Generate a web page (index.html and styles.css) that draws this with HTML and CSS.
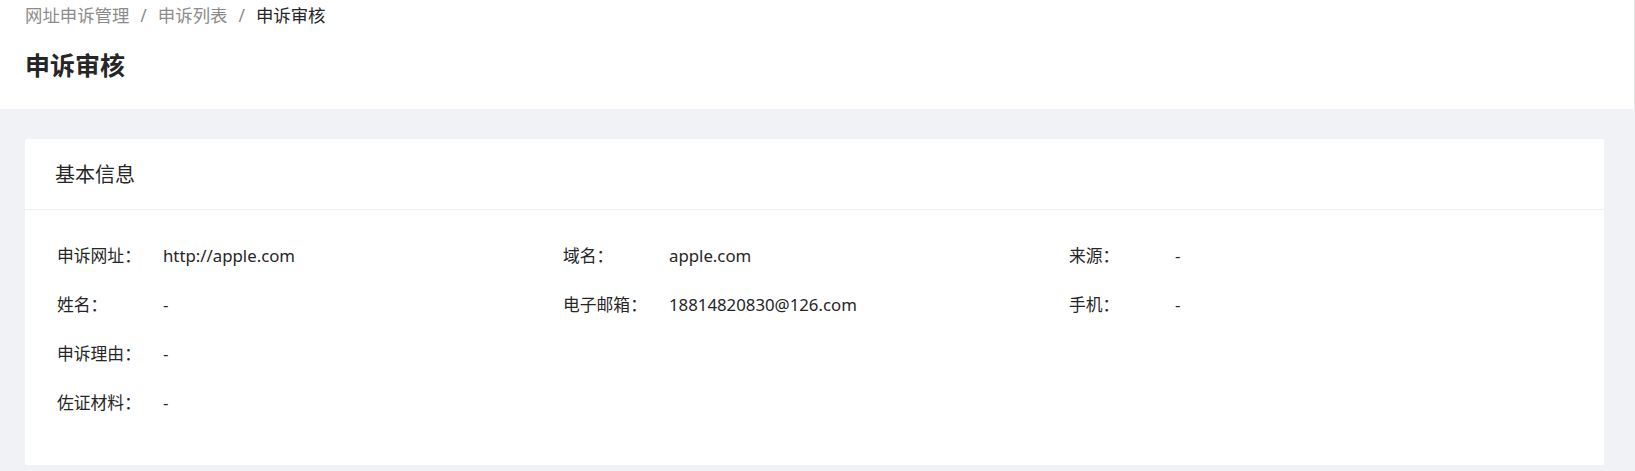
FILE: index.html
```html
<!DOCTYPE html>
<html lang="zh-CN">
<head>
<meta charset="utf-8">
<title>申诉审核</title>
<link rel="stylesheet" href="styles.css">
</head>
<body>
<div class="page-header">
  <div class="breadcrumb">
    <span class="crumb">网址申诉管理</span>
    <span class="sep">/</span>
    <span class="crumb">申诉列表</span>
    <span class="sep">/</span>
    <span class="crumb current">申诉审核</span>
  </div>
  <h1 class="title">申诉审核</h1>
</div>
<div class="content">
  <div class="card">
    <div class="card-head">基本信息</div>
    <div class="card-body">
      <div class="desc">
        <div class="item"><span class="label">申诉网址：</span><span class="value">http://apple.com</span></div>
        <div class="item"><span class="label">域名：</span><span class="value">apple.com</span></div>
        <div class="item"><span class="label">来源：</span><span class="value">-</span></div>
        <div class="item"><span class="label">姓名：</span><span class="value">-</span></div>
        <div class="item"><span class="label">电子邮箱：</span><span class="value">18814820830@126.com</span></div>
        <div class="item"><span class="label">手机：</span><span class="value">-</span></div>
        <div class="item full"><span class="label">申诉理由：</span><span class="value">-</span></div>
        <div class="item full"><span class="label">佐证材料：</span><span class="value">-</span></div>
      </div>
    </div>
  </div>
</div>
</body>
</html>
```

FILE: styles.css
```css
html, body {
  margin: 0;
  padding: 0;
}
body {
  background: #f0f2f5;
  font-family: "Noto Sans", "Noto Sans CJK SC", sans-serif;
  font-size: 16.8px;
  color: #262626;
  height: 471px;
  overflow: hidden;
}
.page-header {
  background: #fff;
  height: 109px;
  box-sizing: border-box;
  padding: 2px 26px 0 25px;
  border-right: 1px solid #e4e4e4;
}
.breadcrumb {
  font-size: 17.4px;
  line-height: 26px;
  color: #8c8c8c;
  display: flex;
  align-items: center;
}
.sep {
  margin: 0 11px;
}
.current {
  color: #262626;
}
.title {
  margin: 18px 0 0;
  font-size: 25px;
  line-height: 38px;
  font-weight: 700;
  color: #262626;
}
.content {
  padding: 30px 31px 0 25px;
}
.card {
  background: #fff;
  border-radius: 2px;
}
.card-head {
  height: 71px;
  box-sizing: border-box;
  padding: 22px 30px 0;
  font-size: 20px;
  line-height: 28px;
  border-bottom: 1px solid #f0f0f0;
}
.card-body {
  padding: 21px 29px 38px 32px;
}
.desc {
  display: grid;
  grid-template-columns: repeat(3, 1fr);
  grid-auto-rows: 49px;
}
.item {
  display: flex;
  align-items: center;
  line-height: 26px;
}
.item.full {
  grid-column: span 3;
}
.label {
  width: 106px;
  flex: none;
}
```
